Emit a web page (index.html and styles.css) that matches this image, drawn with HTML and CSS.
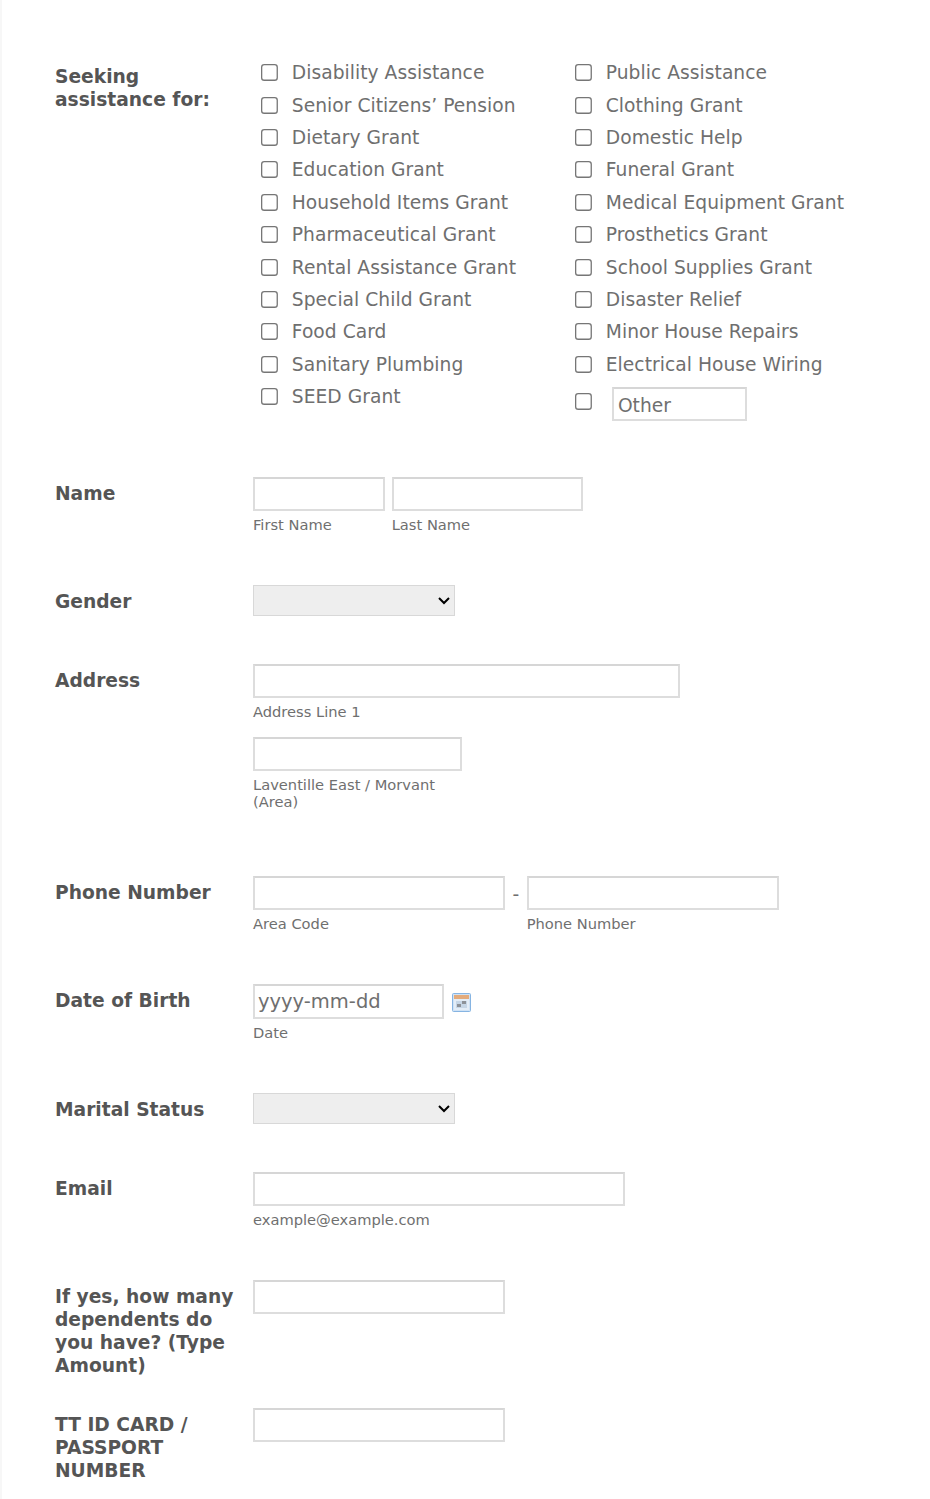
FILE: index.html
```html
<!DOCTYPE html>
<html lang="en">
<head>
  <meta charset="UTF-8">
  <title>Assistance Form</title>
  <link rel="stylesheet" href="styles.css">
</head>
<body>
  <form class="form-all">
    <!-- Seeking assistance -->
    <div class="line line-seeking">
      <label class="line-label">Seeking assistance for:</label>
      <div class="check-grid">
        <label class="check-item"><input type="checkbox"><span>Disability Assistance</span></label>
        <label class="check-item"><input type="checkbox"><span>Public Assistance</span></label>
        <label class="check-item"><input type="checkbox"><span>Senior Citizens’ Pension</span></label>
        <label class="check-item"><input type="checkbox"><span>Clothing Grant</span></label>
        <label class="check-item"><input type="checkbox"><span>Dietary Grant</span></label>
        <label class="check-item"><input type="checkbox"><span>Domestic Help</span></label>
        <label class="check-item"><input type="checkbox"><span>Education Grant</span></label>
        <label class="check-item"><input type="checkbox"><span>Funeral Grant</span></label>
        <label class="check-item"><input type="checkbox"><span>Household Items Grant</span></label>
        <label class="check-item"><input type="checkbox"><span>Medical Equipment Grant</span></label>
        <label class="check-item"><input type="checkbox"><span>Pharmaceutical Grant</span></label>
        <label class="check-item"><input type="checkbox"><span>Prosthetics Grant</span></label>
        <label class="check-item"><input type="checkbox"><span>Rental Assistance Grant</span></label>
        <label class="check-item"><input type="checkbox"><span>School Supplies Grant</span></label>
        <label class="check-item"><input type="checkbox"><span>Special Child Grant</span></label>
        <label class="check-item"><input type="checkbox"><span>Disaster Relief</span></label>
        <label class="check-item"><input type="checkbox"><span>Food Card</span></label>
        <label class="check-item"><input type="checkbox"><span>Minor House Repairs</span></label>
        <label class="check-item"><input type="checkbox"><span>Sanitary Plumbing</span></label>
        <label class="check-item"><input type="checkbox"><span>Electrical House Wiring</span></label>
        <label class="check-item"><input type="checkbox"><span>SEED Grant</span></label>
        <div class="check-item check-other"><input type="checkbox"><input type="text" class="field field-other" placeholder="Other"></div>
      </div>
    </div>

    <div class="line">
      <label class="line-label">Name</label>
      <div class="line-input fields-row">
        <div class="sub-field">
          <input type="text" class="field w-first">
          <label class="sub-label">First Name</label>
        </div>
        <div class="sub-field">
          <input type="text" class="field w-last">
          <label class="sub-label">Last Name</label>
        </div>
      </div>
    </div>

    <div class="line">
      <label class="line-label">Gender</label>
      <div class="line-input">
        <select class="select"><option></option><option>Male</option><option>Female</option></select>
      </div>
    </div>

    <div class="line">
      <label class="line-label">Address</label>
      <div class="line-input">
        <input type="text" class="field w-address">
        <label class="sub-label">Address Line 1</label>
        <div class="area-block">
          <input type="text" class="field w-area">
          <label class="sub-label">Laventille East / Morvant<br>(Area)</label>
        </div>
      </div>
    </div>

    <div class="line">
      <label class="line-label">Phone Number</label>
      <div class="line-input fields-row phone-row">
        <div class="sub-field">
          <input type="text" class="field w-medium">
          <label class="sub-label">Area Code</label>
        </div>
        <span class="phone-dash">-</span>
        <div class="sub-field">
          <input type="text" class="field w-medium">
          <label class="sub-label">Phone Number</label>
        </div>
      </div>
    </div>

    <div class="line">
      <label class="line-label">Date of Birth</label>
      <div class="line-input">
        <div class="date-row">
          <input type="text" class="field field-date" placeholder="yyyy-mm-dd">
          <svg class="date-icon" width="19" height="19" viewBox="0 0 19 19">
            <rect x="0.5" y="0.5" width="18" height="18" rx="1" fill="#cfe2f5" stroke="#86b4e2"/>
            <rect x="2" y="2" width="15" height="15" fill="#e3edf7"/>
            <rect x="2" y="2" width="15" height="4" fill="#e3ab7c"/>
            <rect x="4" y="8" width="11" height="7" fill="#c6d6e6"/>
            <rect x="10" y="8" width="4" height="3" fill="#8d9298"/>
            <rect x="5" y="11" width="4" height="3" fill="#8d9298"/>
          </svg>
        </div>
        <label class="sub-label">Date</label>
      </div>
    </div>

    <div class="line">
      <label class="line-label">Marital Status</label>
      <div class="line-input">
        <select class="select"><option></option><option>Single</option><option>Married</option></select>
      </div>
    </div>

    <div class="line">
      <label class="line-label">Email</label>
      <div class="line-input">
        <input type="text" class="field w-email">
        <label class="sub-label">example@example.com</label>
      </div>
    </div>

    <div class="line">
      <label class="line-label label-tall">If yes, how many dependents do you have? (Type Amount)</label>
      <div class="line-input">
        <input type="text" class="field w-medium">
      </div>
    </div>

    <div class="line line-last">
      <label class="line-label">TT ID CARD / PASSPORT NUMBER</label>
      <div class="line-input">
        <input type="text" class="field w-medium">
      </div>
    </div>
  </form>
</body>
</html>
```

FILE: styles.css
```css
html, body {
  margin: 0;
  height: 1499px;
  overflow: hidden;
}
body {
  font-family: "DejaVu Sans", Verdana, sans-serif;
  color: #555;
  background-color: #fff;
}
.form-all {
  border-left: 2px solid #f7f7f7;
  height: 100%;
  box-sizing: border-box;
  padding: 0 0 0 53px;
}
.line {
  display: flex;
  padding: 24px 0;
}
.line-seeking {
  padding: 56.55px 0 40.45px;
}
.line-last {
  padding-bottom: 0;
}
.line-label {
  flex: 0 0 198px;
  width: 198px;
  box-sizing: border-box;
  padding: 5px 10px 0 0;
  font-size: 18.67px;
  line-height: 23px;
  font-weight: bold;
  color: #555;
}
.line-seeking .line-label {
  padding-top: 8.45px;
}
.label-tall {
  height: 80px;
}
.check-grid {
  display: grid;
  grid-template-columns: 314px 314px;
  grid-auto-rows: 32.4px;
}
.check-item {
  display: flex;
  align-items: center;
  padding-left: 8px;
  font-size: 18.67px;
  letter-spacing: 0.04px;
  color: #6f6f6f;
}
/* the checkboxes are the browser's 13px ones blown up */
.check-item input[type="checkbox"] {
  flex: none;
  zoom: 1.3;
  width: 13px;
  height: 13px;
  margin: 0 10.7px 0 0;
}
.check-other input[type="checkbox"] {
  margin-right: 15.4px;
  position: relative;
  top: 4px;
}
.field {
  display: block;
  box-sizing: border-box;
  height: 34px;
  padding: 0 4px;
  border: 2px solid #ddd;
  border-top-color: #d6d6d6;
  background: #fff;
  font-family: inherit;
  font-size: 18.67px;
  color: #6f6f6f;
}
.field::placeholder {
  color: #6f6f6f;
  opacity: 1;
}
.field-other {
  width: 135px;
  padding-top: 3px;
  position: relative;
  top: 7px;
}
.w-first { width: 132px; }
.w-last { width: 191px; }
.w-address { width: 427px; }
.w-area { width: 209px; }
.w-medium { width: 252px; }
.w-email { width: 372px; }
.field-date {
  width: 191px;
  height: 35px;
  padding-left: 3px;
  font-size: 19.5px;
}
.sub-label {
  display: block;
  margin-top: 5px;
  font-size: 14.67px;
  line-height: 17px;
  height: 21px;
  color: #6f6f6f;
}
.area-block {
  margin-top: 13px;
  padding-bottom: 14px;
}
.area-block .sub-label {
  height: 38px;
}
.fields-row {
  display: flex;
  gap: 6.7px;
}
.phone-row {
  gap: 0;
}
.phone-dash {
  width: 21.7px;
  text-align: center;
  font-size: 18.67px;
  line-height: 38px;
  color: #6f6f6f;
}
/* zoom makes the native arrow as large as in the design */
.select {
  display: block;
  box-sizing: border-box;
  zoom: 1.3;
  width: 155.4px;
  height: 23.85px;
  border: 1.5px solid #d8d8d8;
  border-radius: 0;
  background-color: #eee;
  font-family: inherit;
  font-size: 14px;
}
.date-row {
  display: flex;
  align-items: center;
  gap: 8px;
}
.date-icon {
  flex: none;
  margin-top: 2px;
}
```
